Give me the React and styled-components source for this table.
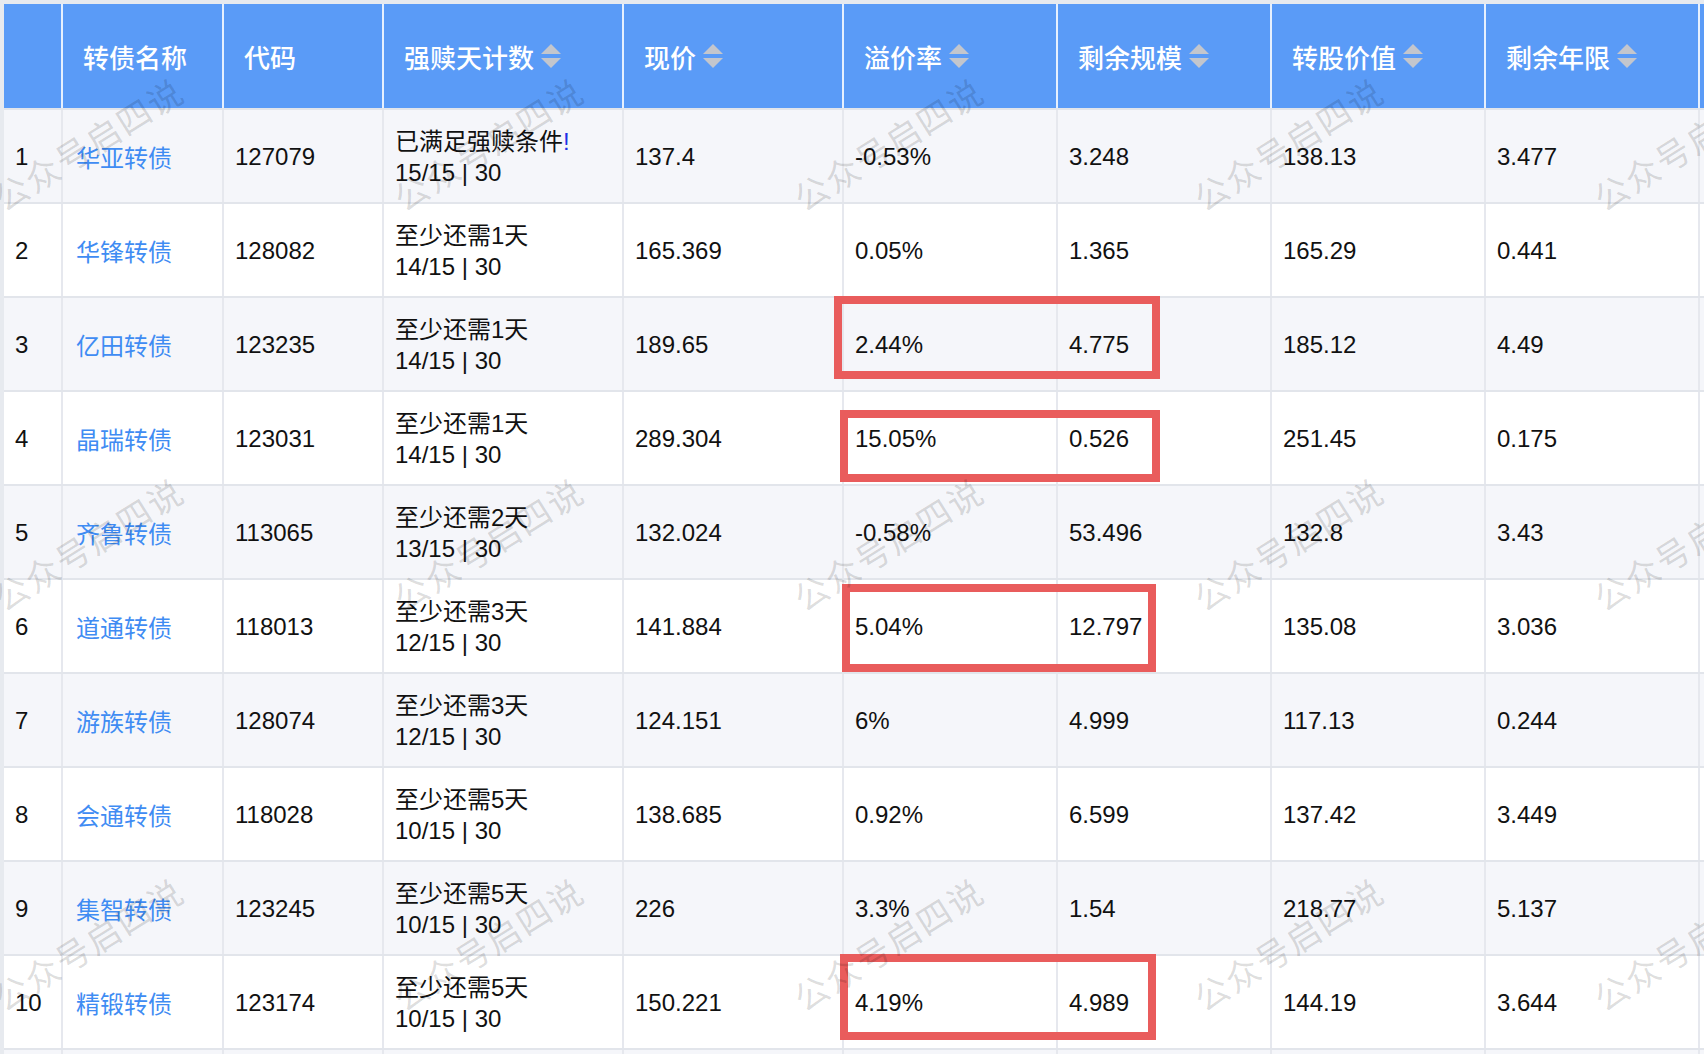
import styled, { createGlobalStyle } from "styled-components";

const GlobalStyle = createGlobalStyle`
  html, body {
    margin: 0;
    padding: 0;
    background: #e7eaef;
  }
  body {
    font-family: "Liberation Sans", "Noto Sans CJK SC", sans-serif;
    color: #111;
  }
`;

const COLS = "59px 161px 160px 240px 220px 214px 214px 214px 214px 200px";

const headers = [
  { title: "", sort: false },
  { title: "转债名称", sort: false },
  { title: "代码", sort: false },
  { title: "强赎天计数", sort: true },
  { title: "现价", sort: true },
  { title: "溢价率", sort: true },
  { title: "剩余规模", sort: true },
  { title: "转股价值", sort: true },
  { title: "剩余年限", sort: true },
  { title: "", sort: false },
];

const rows = [
  ["华亚转债", "127079", "已满足强赎条件", "15/15 | 30", "137.4", "-0.53%", "3.248", "138.13", "3.477"],
  ["华锋转债", "128082", "至少还需1天", "14/15 | 30", "165.369", "0.05%", "1.365", "165.29", "0.441"],
  ["亿田转债", "123235", "至少还需1天", "14/15 | 30", "189.65", "2.44%", "4.775", "185.12", "4.49"],
  ["晶瑞转债", "123031", "至少还需1天", "14/15 | 30", "289.304", "15.05%", "0.526", "251.45", "0.175"],
  ["齐鲁转债", "113065", "至少还需2天", "13/15 | 30", "132.024", "-0.58%", "53.496", "132.8", "3.43"],
  ["道通转债", "118013", "至少还需3天", "12/15 | 30", "141.884", "5.04%", "12.797", "135.08", "3.036"],
  ["游族转债", "128074", "至少还需3天", "12/15 | 30", "124.151", "6%", "4.999", "117.13", "0.244"],
  ["会通转债", "118028", "至少还需5天", "10/15 | 30", "138.685", "0.92%", "6.599", "137.42", "3.449"],
  ["集智转债", "123245", "至少还需5天", "10/15 | 30", "226", "3.3%", "1.54", "218.77", "5.137"],
  ["精锻转债", "123174", "至少还需5天", "10/15 | 30", "150.221", "4.19%", "4.989", "144.19", "3.644"],
];

// annotation boxes drawn over the table
const marks = [
  { x: 834, y: 296, w: 326, h: 83 },
  { x: 840, y: 410, w: 320, h: 72 },
  { x: 842, y: 584, w: 314, h: 88 },
  { x: 840, y: 954, w: 316, h: 86 },
];

function SortIcon() {
  return (
    <SortSvg viewBox="0 0 20 24" width="20" height="24">
      <path d="M0 10 L10 0 L20 10 Z" fill="#c3c6cd" />
      <path d="M0 14 L20 14 L10 24 Z" fill="#c3c6cd" />
    </SortSvg>
  );
}

export default function App() {
  return (
    <Page>
      <GlobalStyle />
      <Table>
        <HeadRow>
          {headers.map((h, i) => (
            <HeadCell key={i}>
              {h.title}
              {h.sort && <SortIcon />}
            </HeadCell>
          ))}
        </HeadRow>
        {rows.map((r, i) => (
          <Row key={i} $odd={i % 2 === 0}>
            <Cell>{i + 1}</Cell>
            <Cell>
              <Link>{r[0]}</Link>
            </Cell>
            <Cell>{r[1]}</Cell>
            <Cell>
              <Stack>
                <span>
                  {r[2]}
                  {i === 0 && <Bang>!</Bang>}
                </span>
                <span>{r[3]}</span>
              </Stack>
            </Cell>
            {r.slice(4).map((v, j) => (
              <Cell key={j}>{v}</Cell>
            ))}
            <Cell />
          </Row>
        ))}
        <Row $odd>
          {headers.map((_, i) => (
            <Cell key={i} />
          ))}
        </Row>
      </Table>
      {marks.map((m, i) => (
        <Mark key={i} $x={m.x} $y={m.y} $w={m.w} $h={m.h} />
      ))}
      <Watermarks>
        {Array.from({ length: 15 }).map((_, i) => (
          <WmCell key={i}>
            <WmText>公众号启四说</WmText>
          </WmCell>
        ))}
      </Watermarks>
    </Page>
  );
}

const Page = styled.div`
  position: relative;
  width: 100vw;
  height: 100vh;
  overflow: hidden;
  padding: 4px 0 0 4px;
  box-sizing: border-box;
  background: #e7eaef;
`;

const Table = styled.div`
  width: 1900px;
  display: flex;
  flex-direction: column;
`;

const HeadRow = styled.div`
  display: grid;
  grid-template-columns: ${COLS};
  height: 104px;
  background: #5a9bf7;
`;

const HeadCell = styled.div`
  display: flex;
  align-items: center;
  gap: 7px;
  padding-left: 20px;
  border-right: 2px solid rgba(255, 255, 255, 0.85);
  color: #fff;
  font-family: "Noto Sans CJK SC", sans-serif;
  font-size: 26px;
  font-weight: 500;
  white-space: nowrap;
  overflow: hidden;
`;

const SortSvg = styled.svg`
  flex-shrink: 0;
  display: block;
`;

const Row = styled.div`
  display: grid;
  grid-template-columns: ${COLS};
  height: 94px;
  box-sizing: border-box;
  border-top: 2px solid #e2e5eb;
  background: ${({ $odd }) => ($odd ? "#f5f6fa" : "#ffffff")};
`;

const Cell = styled.div`
  display: flex;
  align-items: center;
  padding-left: 11px;
  border-right: 2px solid #e6e8ee;
  font-size: 24px;
  line-height: 31px;
  white-space: nowrap;
  overflow: hidden;
`;

const Link = styled.span`
  color: #3f8cf3;
  font-family: "Noto Sans CJK SC", sans-serif;
  padding-left: 2px;
`;

const Stack = styled.div`
  display: flex;
  flex-direction: column;
  padding-top: 2px;
`;

const Bang = styled.span`
  color: #1d2fe6;
`;

const Mark = styled.div`
  position: absolute;
  left: ${({ $x }) => $x}px;
  top: ${({ $y }) => $y}px;
  width: ${({ $w }) => $w}px;
  height: ${({ $h }) => $h}px;
  box-sizing: border-box;
  border: 8px solid #e95c5c;
  pointer-events: none;
`;

const Watermarks = styled.div`
  position: absolute;
  left: -112px;
  top: -57px;
  display: grid;
  grid-template-columns: repeat(5, 400px);
  grid-auto-rows: 400px;
  pointer-events: none;
`;

const WmCell = styled.div`
  display: flex;
  align-items: center;
  justify-content: center;
`;

const WmText = styled.span`
  font-family: "Noto Sans CJK SC", sans-serif;
  font-size: 34px;
  letter-spacing: 2px;
  color: rgba(0, 0, 0, 0.14);
  transform: rotate(-32deg);
  white-space: nowrap;
`;
